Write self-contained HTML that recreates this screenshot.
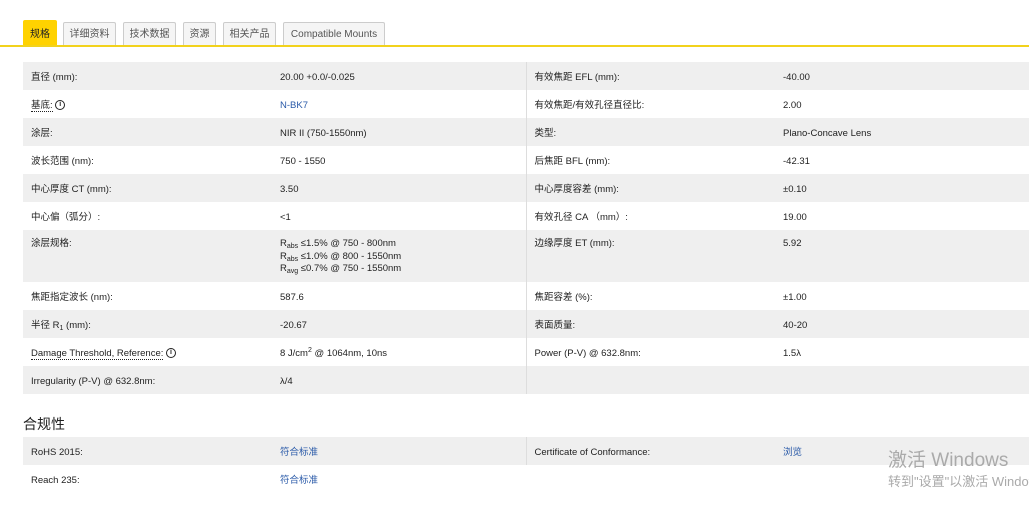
<!DOCTYPE html>
<html><head><meta charset="utf-8"><style>
body{margin:0;width:1029px;height:510px;background:#fff;font-family:"Liberation Sans","Noto Sans CJK SC",sans-serif;font-size:9.5px;color:#222;position:relative;overflow:hidden}
.tabs{position:absolute;left:0;top:0;width:1029px;height:47px;border-bottom:2px solid #f2d21c;box-sizing:border-box}
.tab{position:absolute;top:22px;height:23px;line-height:23px;background:#f5f5f5;border:1px solid #ccc;border-bottom:none;box-sizing:border-box;font-size:10px;color:#555;text-align:center;border-radius:2px 2px 0 0}
.tab.on{background:#ffd200;border-color:#ffd200;color:#222;top:20px;height:25px;line-height:27px}
table{position:absolute;left:23px;border-collapse:collapse;width:1006px;table-layout:fixed}
td{padding:3px 8px 0;height:28px;vertical-align:middle;box-sizing:border-box;line-height:12px}
tr.g td{background:#efefef}
td.c3{border-left:1px solid #ddd}
a{color:#2a5aa8;text-decoration:none}
.u{border-bottom:1px dotted #222}
.i{display:inline-block;width:8px;height:8px;border:1px solid #222;border-radius:50%;font-size:7px;line-height:8px;text-align:center;font-weight:bold;vertical-align:middle}
sub{font-size:7px;line-height:0;vertical-align:-2px}
sup{font-size:7px;line-height:0}
h3{position:absolute;left:23px;top:407px;margin:0;font-size:14px;font-weight:normal;color:#222;line-height:34px}
.wm{position:absolute;left:888px;color:#aaa;white-space:nowrap}
</style></head><body>
<div class="tabs">
<div class="tab on" style="left:23px;width:34px">规格</div>
<div class="tab" style="left:63px;width:53px">详细资料</div>
<div class="tab" style="left:123px;width:53px">技术数据</div>
<div class="tab" style="left:183px;width:33px">资源</div>
<div class="tab" style="left:223px;width:53px">相关产品</div>
<div class="tab" style="left:283px;width:102px">Compatible Mounts</div>
</div>
<table style="top:62px">
<colgroup><col style="width:249px"><col style="width:254px"><col style="width:249px"><col></colgroup>
<tr class="g"><td>直径 (mm):</td><td>20.00 +0.0/-0.025</td><td class="c3">有效焦距 EFL (mm):</td><td>-40.00</td></tr>
<tr><td><span class="u">基底:</span> <span class="i">i</span></td><td><a>N-BK7</a></td><td class="c3">有效焦距/有效孔径直径比:</td><td>2.00</td></tr>
<tr class="g"><td>涂层:</td><td>NIR II (750-1550nm)</td><td class="c3">类型:</td><td>Plano-Concave Lens</td></tr>
<tr><td>波长范围 (nm):</td><td>750 - 1550</td><td class="c3">后焦距 BFL (mm):</td><td>-42.31</td></tr>
<tr class="g"><td>中心厚度 CT (mm):</td><td>3.50</td><td class="c3">中心厚度容差 (mm):</td><td>±0.10</td></tr>
<tr><td>中心偏（弧分）:</td><td>&lt;1</td><td class="c3">有效孔径 CA （mm）:</td><td>19.00</td></tr>
<tr class="g"><td style="height:52px;vertical-align:top;padding-top:8px">涂层规格:</td><td style="vertical-align:top;padding-top:8px;line-height:12.5px">R<sub>abs</sub> ≤1.5% @ 750 - 800nm<br>R<sub>abs</sub> ≤1.0% @ 800 - 1550nm<br>R<sub>avg</sub> ≤0.7% @ 750 - 1550nm</td><td class="c3" style="vertical-align:top;padding-top:8px">边缘厚度 ET (mm):</td><td style="vertical-align:top;padding-top:8px">5.92</td></tr>
<tr><td>焦距指定波长 (nm):</td><td>587.6</td><td class="c3">焦距容差 (%):</td><td>±1.00</td></tr>
<tr class="g"><td>半径 R<sub>1</sub> (mm):</td><td>-20.67</td><td class="c3">表面质量:</td><td>40-20</td></tr>
<tr><td><span class="u">Damage Threshold, Reference:</span> <span class="i">i</span></td><td>8 J/cm<sup>2</sup> @ 1064nm, 10ns</td><td class="c3">Power (P-V) @ 632.8nm:</td><td>1.5λ</td></tr>
<tr class="g"><td>Irregularity (P-V) @ 632.8nm:</td><td>λ/4</td><td class="c3"></td><td></td></tr>
</table>
<h3>合规性</h3>
<table style="top:437px">
<colgroup><col style="width:249px"><col style="width:254px"><col style="width:249px"><col></colgroup>
<tr class="g"><td>RoHS 2015:</td><td><a>符合标准</a></td><td class="c3">Certificate of Conformance:</td><td><a>浏览</a></td></tr>
<tr><td>Reach 235:</td><td><a>符合标准</a></td><td style="border:none"></td><td></td></tr>
</table>
<div class="wm" style="top:445px;font-size:19px">激活 Windows</div>
<div class="wm" style="top:471px;font-size:13px">转到"设置"以激活 Windows。</div>
</body></html>
